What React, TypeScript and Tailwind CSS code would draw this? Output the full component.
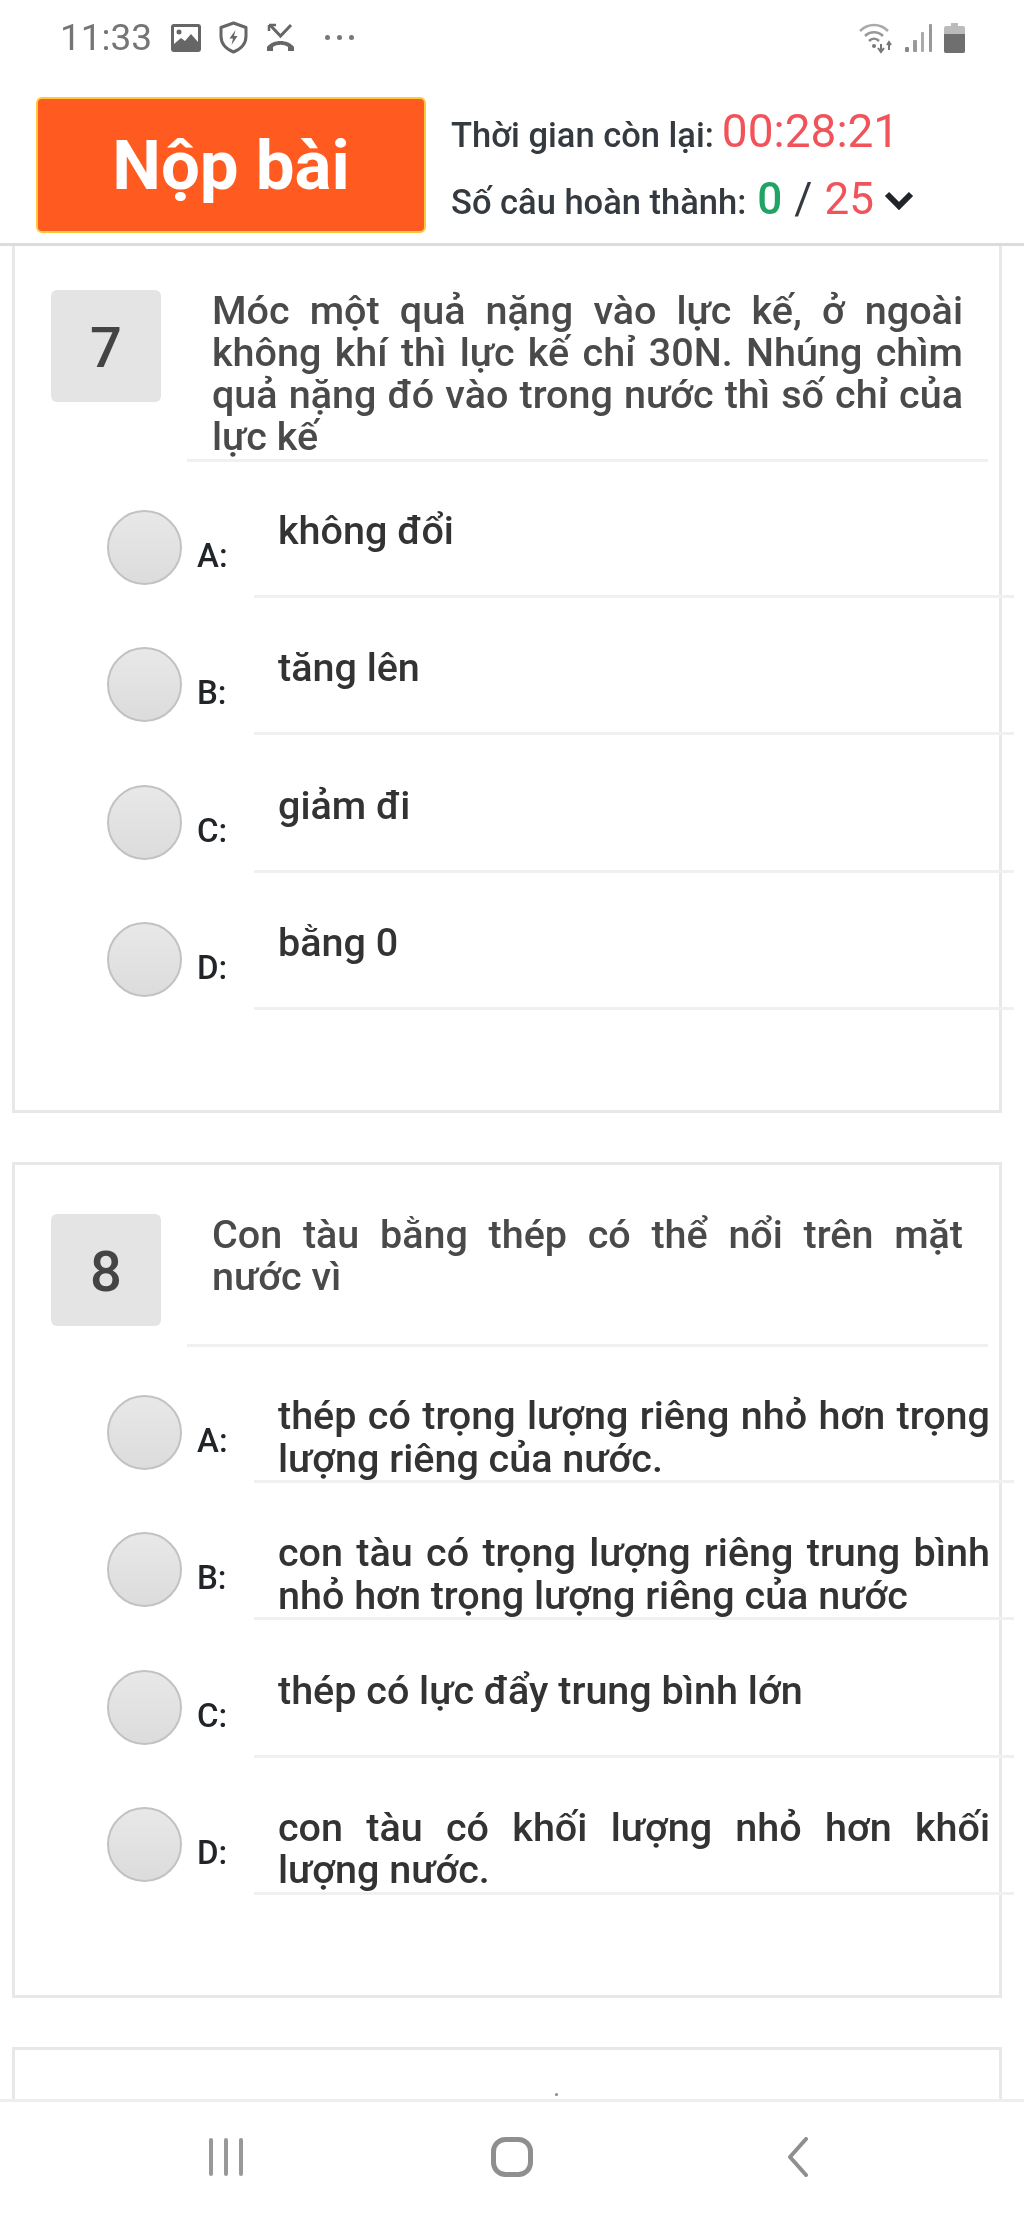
/**
 * Quiz screen on a phone: status bar, submit header, question cards, nav bar.
 */

interface Option {
  key: string;
  text: string;
}

interface Question {
  no: number;
  text: string;
  options: Option[];
}

const QUESTIONS: Question[] = [
  {
    no: 7,
    text: "Móc một quả nặng vào lực kế, ở ngoài không khí thì lực kế chỉ 30N. Nhúng chìm quả nặng đó vào trong nước thì số chỉ của lực kế",
    options: [
      { key: "A", text: "không đổi" },
      { key: "B", text: "tăng lên" },
      { key: "C", text: "giảm đi" },
      { key: "D", text: "bằng 0" },
    ],
  },
  {
    no: 8,
    text: "Con tàu bằng thép có thể nổi trên mặt nước vì",
    options: [
      { key: "A", text: "thép có trọng lượng riêng nhỏ hơn trọng lượng riêng của nước." },
      { key: "B", text: "con tàu có trọng lượng riêng trung bình nhỏ hơn trọng lượng riêng của nước" },
      { key: "C", text: "thép có lực đẩy trung bình lớn" },
      { key: "D", text: "con tàu có khối lượng nhỏ hơn khối lượng nước." },
    ],
  },
];

function StatusBar() {
  return (
    <div className="flex items-center h-[76px] pl-[60px] pr-[59px] pb-[1px] text-[#757575]">
      <span className="text-[37px] leading-none w-[111px]">11:33</span>
      <svg width="30" height="28" viewBox="0 0 30 28" className="mr-[16px]">
        <rect x="0" y="0" width="30" height="28" rx="3" fill="#666" />
        <rect x="3" y="3" width="24" height="17" fill="#fff" />
        <circle cx="8" cy="8" r="2.5" fill="#666" />
        <path d="M3 20l7-6 4 3 6-7 7 8v2H3z" fill="#666" />
      </svg>
      <svg width="33" height="33" viewBox="0 0 33 33" className="mr-[15px]" fill="none">
        <path d="M16.5 2 L29 6.5 V15 C29 23 24 28 16.5 31 C9 28 4 23 4 15 V6.5 Z" stroke="#666" strokeWidth="3" strokeLinejoin="round" />
        <path d="M18.5 9 L12.5 17.5 H16 L14.5 24 L20.5 15 H17 Z" fill="#666" />
      </svg>
      <svg width="31" height="30" viewBox="0 0 31 30" className="mr-[29px]" fill="none">
        <path d="M5 2 L15.5 13 L26 2" stroke="#666" strokeWidth="3" />
        <path d="M4 2h7M4 2v6" stroke="#666" strokeWidth="2.5" />
        <path d="M2 28 V24 C8 16 23 16 29 24 V28 H23 V24 C19 21 12 21 8 24 V28 Z" fill="#666" />
      </svg>
      <span className="flex gap-[7px]">
        <span className="w-[5px] h-[5px] rounded-full bg-[#777]" />
        <span className="w-[5px] h-[5px] rounded-full bg-[#777]" />
        <span className="w-[5px] h-[5px] rounded-full bg-[#777]" />
      </span>
      <div className="flex-1" />
      <svg width="36" height="32" viewBox="0 0 36 32" className="mr-[11px]" fill="none">
        <path d="M2 9 C10 1 22 1 30 9" stroke="#aaa" strokeWidth="2.5" />
        <path d="M7 14 C12 9 20 9 25 14" stroke="#999" strokeWidth="2.5" />
        <path d="M11 19 C14 16 18 16 21 19" stroke="#888" strokeWidth="2.5" />
        <circle cx="16" cy="24" r="2" fill="#777" />
        <path d="M23 22v8M20 26l3 4 3-4" stroke="#777" strokeWidth="2" />
        <path d="M31 28v-8M29 23l2-3 2 3" stroke="#777" strokeWidth="2" />
      </svg>
      <svg width="28" height="28" viewBox="0 0 28 28" className="mr-[11px]">
        <rect x="0" y="23" width="4" height="5" rx="1" fill="#888" />
        <rect x="8" y="16" width="4" height="12" rx="1" fill="#999" />
        <rect x="16" y="8" width="3" height="20" rx="1" fill="#aaa" />
        <rect x="24" y="0" width="3" height="28" rx="1" fill="#999" />
      </svg>
      <svg width="21" height="30" viewBox="0 0 21 30">
        <path d="M7 0h7v3h5a2 2 0 0 1 2 2v23a2 2 0 0 1-2 2H2a2 2 0 0 1-2-2V5a2 2 0 0 1 2-2h5z" fill="#bbb" />
        <path d="M0 11h21v17a2 2 0 0 1-2 2H2a2 2 0 0 1-2-2z" fill="#6f6f6f" />
      </svg>
    </div>
  );
}

function SubmitHeader() {
  return (
    <div className="flex items-start h-[170px] pt-[21px] pl-[36px] border-b-[3px] border-[#dcdcdc] relative z-10 bg-white">
      <button className="flex items-center justify-center w-[390px] h-[136px] rounded-[6px] bg-[#ff5a1f] border-[2px] border-[#ffc93c] text-white text-[69px] font-bold leading-none">
        Nộp bài
      </button>
      <div className="ml-[25px] text-[#343a40] font-medium">
        <div className="flex items-baseline h-[66px] text-[34.5px]">
          Thời gian còn lại:
          <span className="ml-[8px] text-[46px] font-normal text-[#f0545a]">00:28:21</span>
        </div>
        <div className="flex items-baseline h-[66px] pt-[3px] text-[34.5px]">
          Số câu hoàn thành:
          <span className="ml-[11px] text-[44px] font-medium text-[#1fa463]">0</span>
          <span className="ml-[12px] text-[44px] font-normal">/</span>
          <span className="ml-[12px] text-[44px] font-normal text-[#f0545a]">25</span>
          <svg width="30" height="20" viewBox="0 0 30 20" className="ml-[10px] self-center mt-[4px]" fill="none">
            <path d="M3 4 L15 16 L27 4" stroke="#212529" strokeWidth="6" />
          </svg>
        </div>
      </div>
    </div>
  );
}

function OptionRow({ option }: { option: Option }) {
  return (
    <div className="flex items-start h-[137.3px] pl-[92px]">
      <span className="w-[75px] h-[75px] -mt-[2px] rounded-full border-[2px] border-[#c2c2c2] bg-linear-to-b from-[#e8e8e8] via-[#e2e2e2] to-[#dcdcdc] shrink-0" />
      <span className="w-[72px] pl-[15px] pt-[26px] text-[33px] leading-[36px] font-medium text-[#212529] shrink-0">{option.key}:</span>
      <div className="w-[760px] h-[87px] shrink-0 -mt-[1px] px-[24px] pb-[1px] border-b-[3px] border-[#f0f0f0]">
        <p className="-mt-[1px] text-[39.5px] leading-[42.4px] font-medium text-[#333333] text-justify">{option.text}</p>
      </div>
    </div>
  );
}

function QuestionCard({ question }: { question: Question }) {
  return (
    <div className="border-[3px] border-[#e8e8e8] ml-[12px] w-[990px] pt-[49px] pb-[49px] shrink-0">
      <div className="flex items-start pl-[36px] pr-[11px]">
        <div className="flex items-center justify-center w-[110px] h-[112px] pt-[3px] rounded-[6px] bg-[#e4e4e4] text-[#444] text-[56px] font-medium shrink-0">
          {question.no}
        </div>
        <div className="ml-[26px] flex-1 min-h-[133px] px-[25px] pb-[1px] border-b-[3px] border-[#f0f0f0]">
          <p className="text-[39.5px] leading-[42px] font-medium text-[#4a4a4a] text-justify">{question.text}</p>
        </div>
      </div>
      <div className="mt-[50px]">
        {question.options.map((o) => (
          <OptionRow key={o.key} option={o} />
        ))}
      </div>
    </div>
  );
}

function NavBar() {
  return (
    <div className="flex items-center h-[118px] pb-[5px] border-t-[3px] border-[#eeeeee] bg-white relative z-10">
      <svg width="36" height="40" viewBox="0 0 36 40" className="ml-[208px]">
        <rect x="1" y="1" width="4" height="38" rx="2" fill="#999" />
        <rect x="16" y="1" width="4" height="38" rx="2" fill="#999" />
        <rect x="31" y="1" width="4" height="38" rx="2" fill="#999" />
      </svg>
      <svg width="42" height="40" viewBox="0 0 42 40" className="ml-[247px]" fill="none">
        <rect x="2.5" y="2.5" width="37" height="35" rx="12" stroke="#8f8f8f" strokeWidth="5" />
      </svg>
      <svg width="22" height="40" viewBox="0 0 22 40" className="ml-[254px]" fill="none">
        <path d="M19 2 L3 20 L19 38" stroke="#8f8f8f" strokeWidth="4" strokeLinecap="round" strokeLinejoin="round" />
      </svg>
    </div>
  );
}

export default function App() {
  return (
    <div className="flex flex-col w-[1024px] h-[2217px] overflow-hidden bg-white blur-[0.6px] font-['Roboto',sans-serif]">
      <StatusBar />
      <SubmitHeader />
      <div className="flex-1 min-h-0 overflow-hidden flex flex-col gap-[49px] -mt-[8px]">
        {QUESTIONS.map((q) => (
          <QuestionCard key={q.no} question={q} />
        ))}
        <div className="relative border-[3px] border-[#e8e8e8] ml-[12px] w-[990px] h-[200px] shrink-0">
          <span className="absolute left-[540px] top-[43px] w-[3px] h-[3px] rounded-full bg-[#888]" />
        </div>
      </div>
      <NavBar />
    </div>
  );
}
